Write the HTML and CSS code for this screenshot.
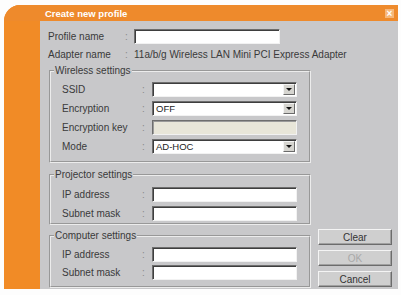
FILE: index.html
```html
<!DOCTYPE html>
<html lang="en">
<head>
    <meta charset="UTF-8">
    <title>Create new profile</title>
    <link rel="stylesheet" href="styles.css">
</head>
<body>
    <div class="window">
        <div class="titlebar">
            <span class="title">Create new profile</span>
            <span class="close-btn">&times;</span>
        </div>
        <div class="panel">
            <div class="main">
                <div class="row top-row">
                    <span class="label">Profile name</span>
                    <span class="colon">:</span>
                    <span class="field wide"></span>
                </div>
                <div class="row top-row">
                    <span class="label">Adapter name</span>
                    <span class="colon">:</span>
                    <span class="value">11a/b/g Wireless LAN Mini PCI Express Adapter</span>
                </div>

                <fieldset class="group wireless">
                    <legend>Wireless settings</legend>
                    <div class="row">
                        <span class="label">SSID</span>
                        <span class="colon">:</span>
                        <span class="field select"><span class="drop"></span></span>
                    </div>
                    <div class="row">
                        <span class="label">Encryption</span>
                        <span class="colon">:</span>
                        <span class="field select"><span class="text">OFF</span><span class="drop"></span></span>
                    </div>
                    <div class="row">
                        <span class="label">Encryption key</span>
                        <span class="colon">:</span>
                        <span class="field disabled"></span>
                    </div>
                    <div class="row">
                        <span class="label">Mode</span>
                        <span class="colon">:</span>
                        <span class="field select"><span class="text">AD-HOC</span><span class="drop"></span></span>
                    </div>
                </fieldset>

                <fieldset class="group projector">
                    <legend>Projector settings</legend>
                    <div class="row">
                        <span class="label">IP address</span>
                        <span class="colon">:</span>
                        <span class="field"></span>
                    </div>
                    <div class="row">
                        <span class="label">Subnet mask</span>
                        <span class="colon">:</span>
                        <span class="field"></span>
                    </div>
                </fieldset>

                <fieldset class="group computer">
                    <legend>Computer settings</legend>
                    <div class="row">
                        <span class="label">IP address</span>
                        <span class="colon">:</span>
                        <span class="field"></span>
                    </div>
                    <div class="row">
                        <span class="label">Subnet mask</span>
                        <span class="colon">:</span>
                        <span class="field"></span>
                    </div>
                </fieldset>
            </div>

            <div class="buttons">
                <button class="btn">Clear</button>
                <button class="btn" disabled>OK</button>
                <button class="btn">Cancel</button>
            </div>
        </div>
    </div>
</body>
</html>
```

FILE: styles.css
```css
html, body {
    margin: 0;
    padding: 0;
    background: #fdfdfd;
}
body {
    font-family: "Liberation Sans", Arial, sans-serif;
    font-size: 10px;
    color: #3a3a3a;
}
.window {
    margin: 5px 0 0 4px;
    width: 394px;
    height: 284px;
    background: #f18b26;
    border-radius: 16px 0 0 0;
    display: grid;
    grid-template-rows: 16px 1fr;
}
.titlebar {
    display: flex;
    align-items: center;
    padding-left: 41px;
    padding-right: 4px;
    background: #ee8a2c;
    border-radius: 16px 0 0 0;
}
.title {
    flex: 1;
    color: #fff;
    font-weight: bold;
    font-size: 9.5px;
    padding-top: 1px;
}
.close-btn {
    width: 9px;
    height: 9px;
    line-height: 9px;
    text-align: center;
    background: #f6b77a;
    color: #fff;
    font-size: 10px;
    font-weight: bold;
}
.panel {
    margin-left: 36px;
    background: #c8c8ca;
    display: flex;
    padding: 8px 0 0 8px;
}
.main {
    display: flex;
    flex-direction: column;
    width: 263px;
}
.row {
    display: flex;
    align-items: center;
    height: 15px;
}
.top-row + .top-row {
    margin-top: 3px;
}
.label {
    flex-shrink: 0;
    width: 77px;
    white-space: nowrap;
}
.colon {
    flex-shrink: 0;
    width: 9px;
    color: #8a8a8a;
}
.value {
    flex-shrink: 0;
    white-space: nowrap;
}
.group .label {
    width: 80px;
}
.group .colon {
    width: 10px;
}
.field {
    box-sizing: border-box;
    flex-shrink: 0;
    width: 145px;
    height: 15px;
    background: #fff;
    border: 1px solid;
    border-color: #6e6e6e #f2f2f2 #f2f2f2 #6e6e6e;
    box-shadow: inset 1px 1px 0 #3e3e3e;
    display: flex;
    align-items: center;
}
.field.wide {
    width: 146px;
}
.field.disabled {
    background: #e8e6d9;
    box-shadow: inset 1px 1px 0 #9a9a9a;
}
.field .text {
    flex: 1;
    padding-left: 3px;
    color: #222;
    font-size: 9.5px;
}
.select {
    justify-content: flex-end;
}
.drop {
    box-sizing: border-box;
    width: 12px;
    height: 11px;
    margin-right: 1px;
    background: #d6d5d0;
    border: 1px solid;
    border-color: #f4f4f4 #6a6a6a #6a6a6a #f4f4f4;
    display: flex;
    align-items: center;
    justify-content: center;
}
.drop::after {
    content: "";
    border-left: 3px solid transparent;
    border-right: 3px solid transparent;
    border-top: 3px solid #111;
}
.group {
    margin: 0 0 0 1px;
    padding: 5px 0 7px 11px;
    border: 2px groove #ececec;
    display: flex;
    flex-direction: column;
    gap: 4px;
}
.group legend {
    padding: 0 1px;
    margin-left: -8px;
    line-height: 12px;
    color: #3a3a3a;
}
.wireless {
    margin-top: 3px;
}
.projector {
    margin-top: 6px;
    padding-top: 6px;
    padding-bottom: 2px;
}
.computer {
    margin-top: 5px;
    padding-top: 5px;
    padding-bottom: 6px;
    gap: 3px;
}
.buttons {
    align-self: flex-end;
    margin: 0 0 2px 7px;
    display: flex;
    flex-direction: column;
    gap: 5px;
}
.btn {
    box-sizing: border-box;
    width: 74px;
    height: 16px;
    padding: 0;
    font-family: "Liberation Sans", Arial, sans-serif;
    font-size: 10px;
    color: #333;
    background: #cfcfcf;
    border: 1px solid;
    border-color: #f4f4f4 #6c6c6c #6c6c6c #f4f4f4;
    box-shadow: inset -1px -1px 0 #a0a0a0;
}
.btn:disabled {
    color: #a8a8a8;
}
```
